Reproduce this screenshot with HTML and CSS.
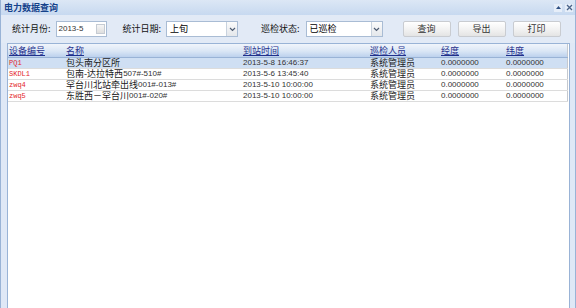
FILE: index.html
```html
<!DOCTYPE html>
<html lang="zh">
<head>
<meta charset="utf-8">
<link rel="stylesheet" href="styles.css">
</head>
<body>
<div class="window">
  <div class="titlebar">
    <span class="title">电力数据查询</span>
    <div class="tools">
      <span class="tool"><svg width="7" height="7" viewBox="0 0 7 7"><path d="M1 5 L3.5 2 L6 5 Z" fill="#2d4f82"/></svg></span>
      <span class="tool"><svg width="7" height="7" viewBox="0 0 7 7"><path d="M1 1 L6 6 M6 1 L1 6" stroke="#4a6388" stroke-width="1.3"/></svg></span>
    </div>
  </div>
  <div class="toolbar">
    <span class="label">统计月份:</span>
    <div class="field date">
      <span class="val num">2013-5</span>
      <span class="cal"></span>
    </div>
    <span class="label l2">统计日期:</span>
    <div class="field select s1">
      <span class="val">上旬</span>
      <span class="arrow"><svg width="7" height="5" viewBox="0 0 7 5"><path d="M1 1 L3.5 3.5 L6 1" stroke="#4d5c72" stroke-width="1.2" fill="none"/></svg></span>
    </div>
    <span class="label l3">巡检状态:</span>
    <div class="field select s2">
      <span class="val">已巡检</span>
      <span class="arrow"><svg width="7" height="5" viewBox="0 0 7 5"><path d="M1 1 L3.5 3.5 L6 1" stroke="#4d5c72" stroke-width="1.2" fill="none"/></svg></span>
    </div>
    <button class="btn b1">查询</button>
    <button class="btn">导出</button>
    <button class="btn">打印</button>
  </div>
  <div class="main">
    <div class="grid">
      <table>
        <colgroup>
          <col class="c1"><col class="c2"><col class="c3"><col class="c4"><col class="c5"><col class="c6">
        </colgroup>
        <thead>
          <tr><th><a>设备编号</a></th><th><a>名称</a></th><th><a>到站时间</a></th><th><a>巡检人员</a></th><th><a>经度</a></th><th><a>纬度</a></th></tr>
        </thead>
        <tbody>
          <tr class="sel"><td class="code">PQ1</td><td>包头南分区所</td><td class="num">2013-5-8 16:46:37</td><td>系统管理员</td><td class="num">0.0000000</td><td class="num">0.0000000</td></tr>
          <tr><td class="code">SKDL1</td><td>包南-达拉特西<span class="num">507#-510#</span></td><td class="num">2013-5-6 13:45:40</td><td>系统管理员</td><td class="num">0.0000000</td><td class="num">0.0000000</td></tr>
          <tr><td class="code">zwq4</td><td>罕台川北站牵出线<span class="num">001#-013#</span></td><td class="num">2013-5-10 10:00:00</td><td>系统管理员</td><td class="num">0.0000000</td><td class="num">0.0000000</td></tr>
          <tr><td class="code">zwq5</td><td>东胜西－罕台川<span class="num">001#-020#</span></td><td class="num">2013-5-10 10:00:00</td><td>系统管理员</td><td class="num">0.0000000</td><td class="num">0.0000000</td></tr>
        </tbody>
      </table>
    </div>
  </div>
</div>
</body>
</html>
```

FILE: styles.css
```css
html, body {
  margin: 0;
  padding: 0;
  background: #ffffff;
}
body {
  font-family: "Noto Sans CJK SC", "Liberation Sans", sans-serif;
  font-size: 9px;
  color: #000;
}
.window {
  width: 576px;
  height: 308px;
  box-sizing: border-box;
  border-left: 1px solid #99b3d6;
  border-right: 1px solid #99b3d6;
  background: #dfe8f6;
  display: flex;
  flex-direction: column;
}
.titlebar {
  height: 15px;
  flex: none;
  background: linear-gradient(#dce7f5, #c7d9f0);
  display: flex;
  align-items: center;
  justify-content: space-between;
  padding: 0 2px 0 3px;
}
.title {
  font-weight: bold;
  color: #15428b;
  font-size: 9px;
  line-height: 15px;
}
.tools {
  display: flex;
  gap: 3px;
  align-items: center;
}
.tool {
  width: 8px;
  height: 8px;
  display: flex;
  align-items: center;
  justify-content: center;
  background: #e6eef9;
}
.toolbar {
  height: 28px;
  flex: none;
  box-sizing: border-box;
  display: flex;
  align-items: center;
  padding: 0 0 0 11px;
  background: #e2eaf6;
}
.label {
  line-height: 16px;
  color: #111;
}
.l2 { margin-left: 16px; }
.l3 { margin-left: 23px; }
.field {
  height: 16px;
  box-sizing: border-box;
  border: 1px solid #a9bcd4;
  background: #fff;
  display: flex;
  align-items: center;
  justify-content: space-between;
}
.date {
  width: 51px;
  margin-left: 5px;
  padding-left: 2px;
}
.s1 { width: 72px; margin-left: 5px; padding-left: 3px; }
.s2 { width: 77px; margin-left: 6px; padding-left: 3px; }
.val {
  line-height: 14px;
}
.cal {
  width: 9px;
  height: 10px;
  margin-right: 1px;
  box-sizing: border-box;
  border: 1px solid #c5cbd3;
  background: linear-gradient(#f6f6f6, #dedede);
}
.arrow {
  width: 11px;
  height: 14px;
  box-sizing: border-box;
  border-left: 1px solid #c8d2de;
  background: linear-gradient(#fbfbfb, #e4e7eb);
  display: flex;
  align-items: center;
  justify-content: center;
}
.btn {
  width: 48px;
  height: 16px;
  margin-left: 7px;
  padding: 0;
  box-sizing: border-box;
  border: 1px solid #c9ccd1;
  border-radius: 2px;
  background: linear-gradient(#ffffff, #f3f3f3 50%, #e4e4e4);
  font-family: "Noto Sans CJK SC", sans-serif;
  font-size: 9px;
  color: #333;
  line-height: 14px;
}
.b1 { margin-left: 20px; }
.main {
  flex: 1;
  padding: 0 5px 0 6px;
  display: flex;
}
.grid {
  flex: 1;
  background: #fff;
  border-left: 1px solid #99b3d6;
  border-right: 1px solid #99b3d6;
  border-top: 1px solid #99b3d6;
}
table {
  width: 559px;
  border-collapse: collapse;
  table-layout: fixed;
  border-right: 1px solid #c4c9d0;
}
.c1 { width: 57px; }
.c2 { width: 177px; }
.c3 { width: 127px; }
.c4 { width: 71px; }
.c5 { width: 65px; }
.c6 { width: 62px; }
th {
  height: 13px;
  padding: 0 0 0 1px;
  text-align: left;
  font-weight: normal;
  background: linear-gradient(#f1f5fb, #dae6f5 55%, #bcd1ed);
  border-bottom: 1px solid #99b3d6;
  line-height: 12px;
}
th a {
  color: #1f2f8c;
  text-decoration: underline;
}
td {
  height: 10px;
  padding: 0 0 0 1px;
  line-height: 10px;
  border-bottom: 1px solid #dcdcdc;
  white-space: nowrap;
  overflow: hidden;
  color: #1a1a1a;
}
tr.sel td {
  background: #cfdff3;
}
.num {
  font-family: "Liberation Sans", sans-serif;
  font-size: 8px;
  color: #333;
}
td .num {
  display: inline-block;
  line-height: 10px;
  vertical-align: top;
}
.code {
  font-family: "Liberation Mono", monospace;
  font-size: 7px;
  color: #e3262c;
}
```
